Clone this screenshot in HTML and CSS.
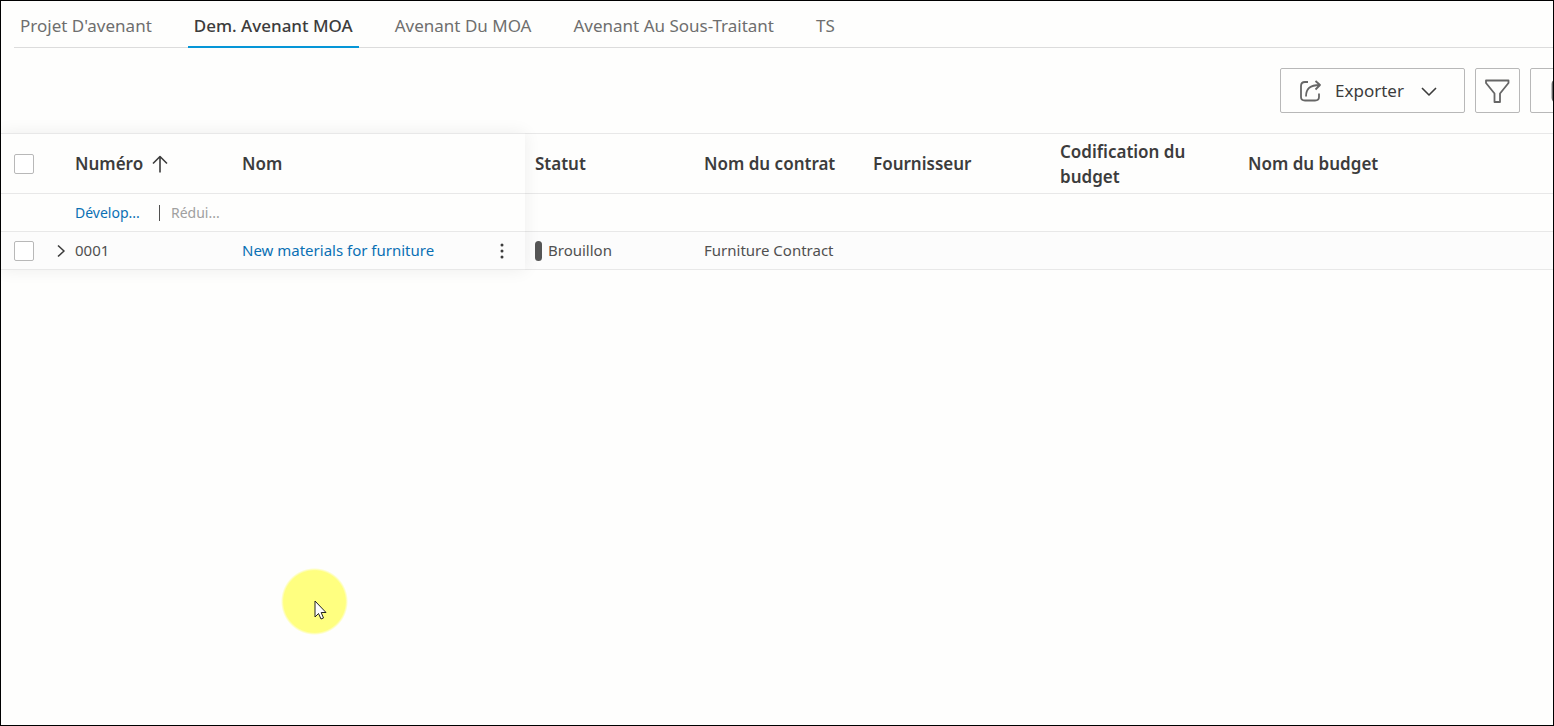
FILE: index.html
```html
<!DOCTYPE html>
<html lang="fr">
<head>
    <meta charset="UTF-8">
    <meta name="viewport" content="width=device-width, initial-scale=1.0">
    <title>Dem. Avenant MOA</title>
    <link rel="stylesheet" href="styles.css">
</head>
<body>
    <div class="page">
        <nav class="tabs">
            <a href="#" class="tab">Projet D'avenant</a>
            <a href="#" class="tab active">Dem. Avenant MOA</a>
            <a href="#" class="tab">Avenant Du MOA</a>
            <a href="#" class="tab">Avenant Au Sous-Traitant</a>
            <a href="#" class="tab">TS</a>
        </nav>

        <div class="toolbar">
            <button type="button" class="btn btn-export">
                <svg width="24" height="24" viewBox="0 0 24 24" class="icon">
                    <path d="M10 3H7Q3 3 3 7V18Q3 21.500 7 21.500H17Q21 21.500 21 18V14.500"/>
                    <path d="M8 17.500C8 10 12 6 21.500 6M17.500 2L22 6L17.500 10.500"/>
                </svg>
                <span>Exporter</span>
                <svg width="16" height="16" viewBox="0 0 16 16" class="icon icon-dark">
                    <path d="M1 5L8 12L15 5"/>
                </svg>
            </button>
            <button type="button" class="btn btn-square" aria-label="Filtrer">
                <svg width="25" height="25" viewBox="0 0 25 25" class="icon">
                    <path d="M1 2.500H23.500V5L15 15.500V24H9.500V15.500L1 5Z"/>
                </svg>
            </button>
            <button type="button" class="btn btn-columns" aria-label="Colonnes">
                <svg width="24" height="24" viewBox="0 0 24 24" class="icon">
                    <rect x="1.500" y="1" width="21" height="22" rx="4"/>
                </svg>
            </button>
        </div>

        <div class="grid">
            <table>
                <colgroup>
                    <col class="col-check">
                    <col class="col-expand">
                    <col class="col-number">
                    <col class="col-name">
                    <col class="col-status">
                    <col class="col-contract">
                    <col class="col-supplier">
                    <col class="col-code">
                    <col class="col-budget">
                </colgroup>
                <thead>
                    <tr>
                        <th class="check"><input type="checkbox" aria-label="Tout"></th>
                        <th></th>
                        <th>
                            <span class="sorted">Numéro
                                <svg width="16" height="18" viewBox="0 0 16 18" class="icon icon-dark">
                                    <path d="M8 17.500V1.500M1 8.500L8 1.500L15 8.500"/>
                                </svg>
                            </span>
                        </th>
                        <th>Nom</th>
                        <th>Statut</th>
                        <th>Nom du contrat</th>
                        <th>Fournisseur</th>
                        <th>Codification du budget</th>
                        <th>Nom du budget</th>
                    </tr>
                </thead>
                <tbody>
                    <tr>
                        <td></td>
                        <td></td>
                        <td>
                            <div class="expand-all">
                                <button type="button" class="link expand">Dévelop...</button>
                                <button type="button" class="link collapse" disabled>Rédui...</button>
                            </div>
                        </td>
                        <td></td>
                        <td></td>
                        <td></td>
                        <td></td>
                        <td></td>
                        <td></td>
                    </tr>
                    <tr class="data">
                        <td class="check"><input type="checkbox" aria-label="0001"></td>
                        <td class="expander">
                            <button type="button" aria-label="Ouvrir">
                                <svg width="9" height="14" viewBox="0 0 9 14" class="icon icon-dark">
                                    <path d="M2 1.500L8 7L2 12.500"/>
                                </svg>
                            </button>
                        </td>
                        <td>0001</td>
                        <td>
                            <div class="name">
                                <a href="#">New materials for furniture</a>
                                <button type="button" aria-label="Actions">
                                    <svg width="4" height="16" viewBox="0 0 4 16">
                                        <circle cx="2" cy="2" r="1.500"/>
                                        <circle cx="2" cy="8" r="1.500"/>
                                        <circle cx="2" cy="14" r="1.500"/>
                                    </svg>
                                </button>
                            </div>
                        </td>
                        <td><span class="status">Brouillon</span></td>
                        <td>Furniture Contract</td>
                        <td></td>
                        <td></td>
                        <td></td>
                    </tr>
                </tbody>
            </table>
            <div class="frozen-shadow"></div>
        </div>

        <div class="pointer">
            <svg width="13" height="20" viewBox="0 0 13 20">
                <path d="M1 1V17L4.500 13.500L7 19L9.500 18L7.200 12.500H12Z"/>
            </svg>
        </div>
    </div>
</body>
</html>
```
FILE: styles.css
```css
* {
    box-sizing: border-box;
}

body {
    margin: 0;
    font-family: "Noto Sans", sans-serif;
    font-size: 15px;
    color: #505050;
    background-color: #fefefd;
}

button {
    font-family: inherit;
    cursor: pointer;
}

.page {
    position: relative;
    min-height: 100vh;
    border: 1px solid #000;
    overflow: hidden;
}

.icon {
    fill: none;
    stroke: #666;
    stroke-width: 1.8;
    stroke-linejoin: round;
    flex: none;
}

.icon-dark {
    stroke: #3c3c3c;
    stroke-width: 1.6;
}

/* tabs */
.tabs {
    display: flex;
    gap: 30px;
    margin-left: 13px;
    height: 47px;
    border-bottom: 1px solid #dcdcdc;
}

.tab {
    height: 47px;
    padding: 0 6px;
    font-size: 17px;
    line-height: 50px;
    color: #6e6e6e;
    text-decoration: none;
    white-space: nowrap;
}

.tab.active {
    font-weight: 500;
    color: #3c3c3c;
    border-bottom: 2px solid #0696d7;
}

/* toolbar */
.toolbar {
    display: flex;
    justify-content: flex-end;
    gap: 10px;
    margin-right: -42px;
    padding: 20px 0;
}

.btn {
    display: flex;
    align-items: center;
    justify-content: center;
    height: 45px;
    padding: 0;
    background-color: transparent;
    border: 1px solid #b8b8b8;
    border-radius: 2px;
    color: #3c3c3c;
    font-size: 17px;
}

.btn-export {
    justify-content: flex-start;
    width: 185px;
    padding-left: 17px;
    gap: 13px;
}

.btn-export .icon-dark {
    margin-left: 4px;
}

.btn-square {
    width: 45px;
}

.btn-columns {
    width: 65px;
}

/* grid */
.grid {
    position: relative;
}

table {
    width: 100%;
    table-layout: fixed;
    border-collapse: collapse;
}

.col-check { width: 46px; }
.col-expand { width: 18px; }
.col-number { width: 167px; }
.col-name { width: 293px; }
.col-status { width: 169px; }
.col-contract { width: 169px; }
.col-supplier { width: 187px; }
.col-code { width: 188px; }

th, td {
    height: 38px;
    padding: 0 0 0 10px;
    text-align: left;
    vertical-align: middle;
    border-top: 1px solid #e8e8e8;
    border-bottom: 1px solid #e8e8e8;
}

th {
    height: 60px;
    padding-right: 20px;
    font-size: 17px;
    font-weight: 600;
    line-height: 25px;
    color: #3c3c3c;
}

td {
    font-size: 15px;
    line-height: 21px;
    white-space: nowrap;
}

.data {
    background-color: #fcfcfc;
}

.check {
    padding: 0 0 0 13px;
}

input[type="checkbox"] {
    appearance: none;
    display: block;
    width: 20px;
    height: 20px;
    margin: 0;
    background-color: #fff;
    border: 1px solid #b8b8b8;
    border-radius: 2px;
}

.sorted {
    display: flex;
    align-items: center;
    gap: 9px;
}

.expand-all {
    display: flex;
    align-items: center;
}

.link {
    padding: 0;
    background: none;
    border: none;
    font-size: 14px;
    line-height: 16px;
}

.expand {
    width: 85px;
    text-align: left;
    color: #0a70b4;
    border-right: 1px solid #505050;
}

.collapse {
    padding-left: 11px;
    color: #a0a0a0;
}

.expander button, .name button {
    display: flex;
    padding: 0;
    background: none;
    border: none;
}

.expander {
    padding-left: 9px;
}

.name {
    display: flex;
    align-items: center;
    justify-content: space-between;
    padding-right: 21px;
}

.name a {
    color: #0a70b4;
    text-decoration: none;
}

.name svg {
    fill: #3c3c3c;
}

.status {
    display: flex;
    align-items: center;
    gap: 6px;
}

.status::before {
    content: "";
    width: 7px;
    height: 20px;
    background-color: #555;
    border-radius: 4px;
}

/* shadow around the frozen columns */
.frozen-shadow {
    position: absolute;
    top: 0;
    bottom: 0;
    left: 0;
    width: 524px;
    box-shadow: 0 0 16px rgba(0, 0, 0, 0.07);
    pointer-events: none;
}

/* mouse pointer with its highlight */
.pointer {
    position: absolute;
    top: 567px;
    left: 280px;
    width: 67px;
    height: 67px;
    padding: 32px 0 0 33px;
    background: radial-gradient(circle closest-side, #ffff80 92%, rgba(255, 255, 128, 0) 100%);
}

.pointer svg {
    display: block;
    fill: #fff;
    stroke: #222;
    stroke-width: 1;
}
```
